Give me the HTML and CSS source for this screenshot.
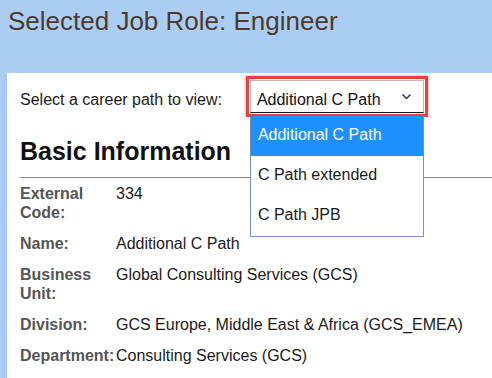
FILE: index.html
```html
<!DOCTYPE html>
<html>
<head>
<meta charset="utf-8">
<link rel="stylesheet" href="styles.css">
</head>
<body>
<header class="top">
  <h1 class="title">Selected Job Role: Engineer</h1>
</header>
<main class="panel">
  <div class="picker-row">
    <span class="picker-label">Select a career path to view:</span>
    <div class="picker">
      <div class="select">
        <span>Additional C Path</span>
        <svg class="chev" width="9" height="5" viewBox="0 0 9 5"><path d="M0.5 0.5 L4.5 4.5 L8.5 0.5" fill="none" stroke="#222" stroke-width="1.2"/></svg>
      </div>
      <ul class="menu">
        <li class="opt active">Additional C Path</li>
        <li class="opt">C Path extended</li>
        <li class="opt">C Path JPB</li>
      </ul>
    </div>
  </div>
  <h2 class="section">Basic Information</h2>
  <div class="info">
    <div class="lbl">External Code:</div><div class="val">334</div>
    <div class="lbl">Name:</div><div class="val">Additional C Path</div>
    <div class="lbl">Business Unit:</div><div class="val">Global Consulting Services (GCS)</div>
    <div class="lbl">Division:</div><div class="val">GCS Europe, Middle East &amp; Africa (GCS_EMEA)</div>
    <div class="lbl">Department:</div><div class="val">Consulting Services (GCS)</div>
  </div>
</main>
</body>
</html>
```
FILE: styles.css
```css
html, body {
  margin: 0;
  padding: 0;
  height: 100%;
}
body {
  background: #abcdf4;
  font-family: "Liberation Sans", Arial, sans-serif;
  color: #222;
  overflow: hidden;
}
.top {
  height: 73px;
  box-sizing: border-box;
  padding: 6px 0 0 8px;
}
.title {
  margin: 0;
  font-size: 26px;
  line-height: 30px;
  font-weight: normal;
  color: #4b3a2e;
}
.panel {
  margin-left: 7px;
  background: #fff;
  height: calc(100% - 73px);
  padding: 3px 0 0 13px;
  box-sizing: border-box;
}
.picker-row {
  display: flex;
  align-items: baseline;
  gap: 24px;
  font-size: 16px;
  line-height: 19px;
}
.picker-label {
  color: #1a1a1a;
}
.picker {
  position: relative;
  width: 182px;
  box-sizing: border-box;
  border: 3px solid #ea4040;
  padding: 1px;
  box-shadow: 0 0 3px rgba(0,0,0,0.35);
}
.select {
  display: flex;
  justify-content: space-between;
  align-items: baseline;
  border: 1px solid #b8b8c0;
  border-bottom-color: #1a1a1a;
  padding: 9px 12px 3px 6px;
  color: #111;
}
.chev {
  align-self: center;
  margin-top: -6px;
}
.menu {
  position: absolute;
  left: 1px;
  top: 37px;
  width: 174px;
  box-sizing: border-box;
  margin: 0;
  padding: 0;
  list-style: none;
  background: #fff;
  border: 1px solid #7090c8;
  border-top: none;
}
.opt {
  height: 40px;
  box-sizing: border-box;
  padding: 9px 7px 0 7px;
  color: #1a1a1a;
}
.opt.active {
  background: #1e90ff;
  color: #fff;
}
.section {
  margin: 19px 0 0 0;
  font-size: 25px;
  line-height: 30px;
  font-weight: bold;
  color: #111;
  padding-bottom: 11px;
  border-bottom: 1px solid #8a8a8a;
}
.info {
  display: grid;
  grid-template-columns: 96px 1fr;
  font-size: 16px;
  line-height: 19px;
}
.lbl, .val {
  padding: 6px 0;
}
.lbl {
  font-weight: bold;
  color: #555;
}
.val {
  color: #1a1a1a;
}
```
